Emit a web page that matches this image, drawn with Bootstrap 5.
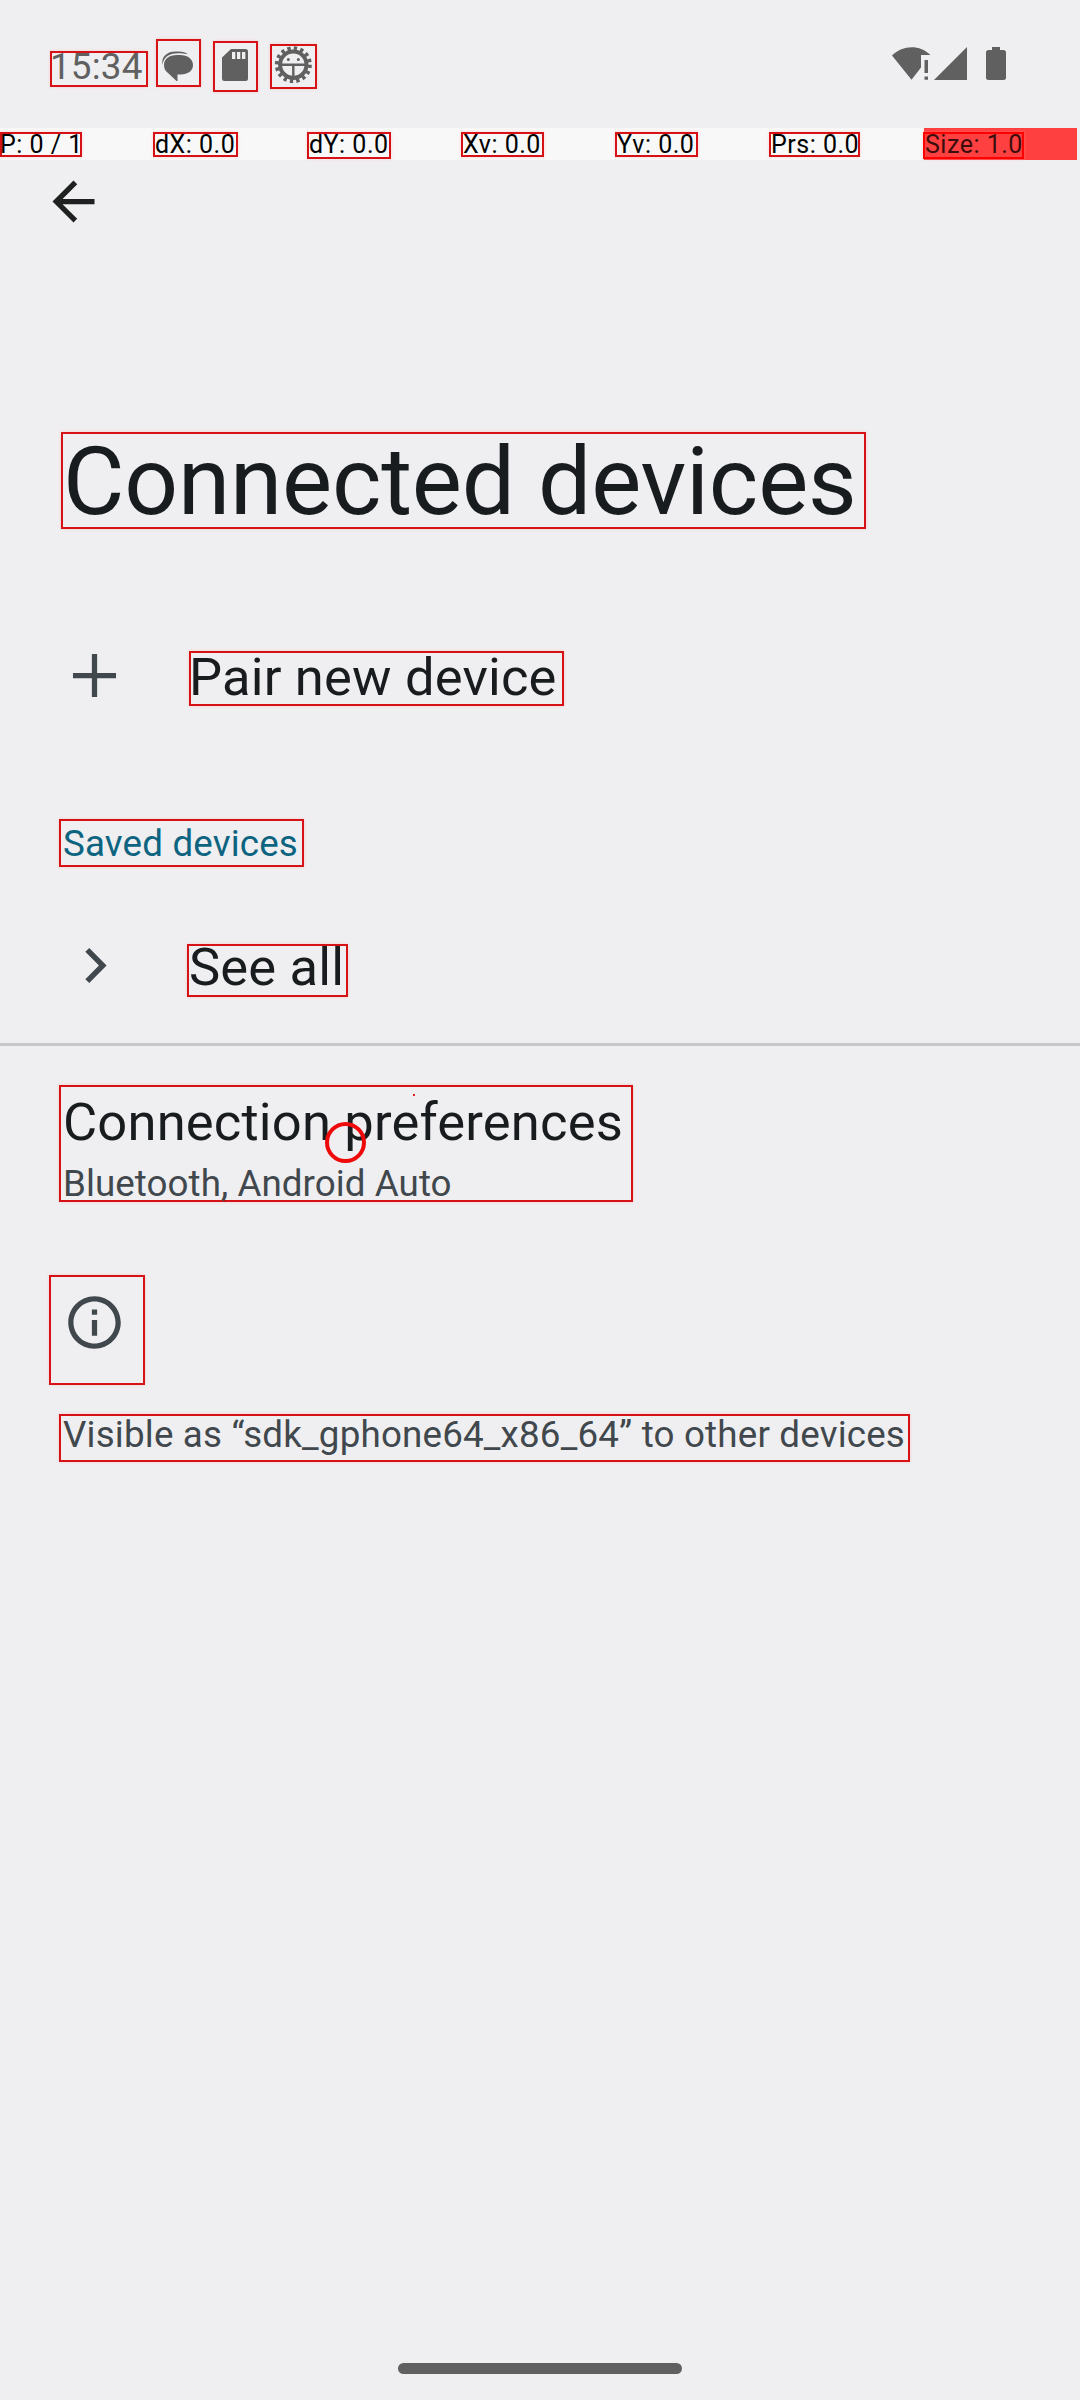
<!DOCTYPE html>
<html lang="en">
<head>
<meta charset="utf-8">
<meta name="viewport" content="width=device-width, initial-scale=1">
<title>Connected devices</title>
<link href="https://cdn.jsdelivr.net/npm/bootstrap@5.3.0/dist/css/bootstrap.min.css" rel="stylesheet">
<style>
body{background:#efeff1;color:#191c1e;font-family:Roboto,"Liberation Sans",sans-serif;width:1080px;height:2400px;overflow:hidden}
svg{display:block;flex:none}
.hl{border:2px solid #d61216;box-shadow:0 0 3px #ff9c9c66;white-space:nowrap;flex:none}
.status{height:128px;padding-left:50px;color:#606060}
.clock{width:98px;height:36px;margin-top:51px;font-size:36.75px;line-height:28px;text-indent:-2px;letter-spacing:.2px}
.probe{height:32px;width:1077px;gap:1px;font-size:25px;line-height:21px;color:#000;letter-spacing:.5px}
.cell{width:153.15px;background:#f8f8f8;padding-top:4px}
.cell .hl{height:25px;margin-left:-1px;width:max-content}
.tall .hl{height:27px!important}
.first .hl{margin-left:0;text-indent:-2px}
.cell.full{background:#ff4040;color:#3c0d0d}
.full .hl{border-color:#f00}
.back{height:272px;padding:10px 0 0 42px}
.title{margin-left:61px;width:805px;height:97px;font-size:94.5px;line-height:96px;letter-spacing:-.2px}
.item{font-size:52.5px;letter-spacing:.18px}
.sub{font-size:36.75px;color:#41484d;letter-spacing:.06px}
.pair{margin-top:122px;height:55px;padding-left:63px}
.pair .hl{width:375px;margin-left:63px;line-height:49px}
.saved{margin:113px 0 0 59px;width:245px;height:48px;color:#0c6480;padding-left:2px;line-height:46px;letter-spacing:.16px}
.seeall{margin-top:77px;height:53px;padding-left:63px}
.seeall .hl{width:161px;margin-left:61px;height:53px;line-height:43px}
.rule{margin-top:46px;height:3px;background:#c7c7c9}
.prefs{margin:39px 0 0 59px;width:574px;height:117px;padding-left:2px}
.prefs .item{line-height:71px}.prefs .sub{line-height:49px;margin-top:1px}
.touch{width:41px;height:41px;border:4px solid #ee0a0a;left:264px;top:35px}
.speck{width:2px;height:2px;background:#d22;left:352px;top:7px}
.info{margin:73px 0 0 49px;width:96px;height:110px;padding:14px 0 0 12px}
.visible-as{margin:29px 0 0 59px;width:851px;height:48px;padding-left:2px;line-height:37px;letter-spacing:.18px}
.home{width:284px;height:11px;margin-bottom:26px;background:#606060}
.nudge{margin-left:-2px}
</style>
<script src="https://cdn.jsdelivr.net/npm/bootstrap@5.3.0/dist/js/bootstrap.bundle.min.js"></script>
</head>
<body class="d-flex flex-column">
<header class="status d-flex align-items-start flex-shrink-0">
  <div class="hl clock">15:34</div>
  <div class="hl" style="margin:39px 0 0 8px">
    <svg width="41" height="44" viewBox="158 41 41 44" fill="currentColor"><path d="M177 55h3c7.500 0 13 4 13 10s-5.500 9.500-12 9.500h-3.500V81h-1L168 73c-3-2-4-5-4-8 0-6 5-10 13-10z"/><path d="M162.500 65c-1.500-9 5-13.500 13-13.500h3c4.500 0 7.500 1 9 2.700-3-1-6-1-9-1-8.500 0-15 3-16 11.800z"/></svg>
  </div>
  <div class="hl" style="margin:41px 0 0 12px">
    <svg width="41" height="47" viewBox="215 43 41 47"><path fill="currentColor" d="M231 49h14.500a2.500 2.500 0 0 1 2.500 2.500v27a2.500 2.500 0 0 1-2.500 2.500h-21a2.500 2.500 0 0 1-2.500-2.500V57.500z"/><path fill="#efeff1" d="M232 52h3.300v7H232zM237 52h3.300v7H237zM242 52h3.300v7H242z"/></svg>
  </div>
  <div class="hl" style="margin:44px 0 0 12px">
    <svg width="43" height="41" viewBox="272 46 43 41" fill="none" stroke="currentColor"><circle cx="293.300" cy="64.700" r="13.200" stroke-width="4"/><circle cx="293.300" cy="64.700" r="16.500" stroke-width="4" stroke-dasharray="3.300 3.180"/><path d="M280 64.700h27M293.300 64.700v13" stroke-width="2.400"/><circle cx="288.300" cy="59.500" r="1.500" fill="currentColor" stroke="none"/><circle cx="298.300" cy="59.500" r="1.500" fill="currentColor" stroke="none"/></svg>
  </div>
  <svg class="ms-auto" style="margin:45px 72px 0 0" width="118" height="38" viewBox="890 45 118 38" fill="currentColor"><path d="M892 55.500C903 44.500 920 44.500 930.500 55H921v12.500l-9.500 12.300z"/><path d="M924.500 60h3.500v13h-3.500zM924.500 76.500h3.500v3.300h-3.500zM934 80l33-33v33z"/><path d="M992 47h8v3h3.500a2.500 2.500 0 0 1 2.500 2.500v25a2.500 2.500 0 0 1-2.500 2.500h-15a2.500 2.500 0 0 1-2.500-2.500v-25a2.500 2.500 0 0 1 2.500-2.500h3.500z"/></svg>
</header>
<div class="probe d-flex flex-shrink-0">
  <div class="cell first"><div class="hl" style="width:82px">P: 0 / 1</div></div>
  <div class="cell"><div class="hl" style="width:85px">dX: 0.0</div></div>
  <div class="cell tall"><div class="hl" style="width:84px">dY: 0.0</div></div>
  <div class="cell"><div class="hl" style="width:83px">Xv: 0.0</div></div>
  <div class="cell"><div class="hl" style="width:83px">Yv: 0.0</div></div>
  <div class="cell"><div class="hl" style="width:91px">Prs: 0.0</div></div>
  <div class="cell full tall"><div class="hl" style="width:101px">Size: 1.0</div></div>
</div>
<div class="back flex-shrink-0"><svg width="63" height="63" viewBox="0 0 24 24" fill="#1f2020"><path d="M20 11H7.830l5.590-5.590L12 4l-8 8 8 8 1.410-1.410L7.830 13H20z"/></svg></div>
<main class="d-flex flex-column flex-grow-1">
  <h1 class="hl title fw-normal mb-0">Connected devices</h1>
  <div class="pair d-flex align-items-center">
    <svg width="63" height="63" viewBox="0 0 24 24" fill="#41484d" style="margin-top:-6px"><path d="M20.200 13h-7.200v7.200h-2V13H3.800v-2H11V3.800h2V11h7.200z"/></svg>
    <div class="hl item h-100"><span class="nudge">Pair new device</span></div>
  </div>
  <div class="hl sub saved">Saved devices</div>
  <div class="seeall d-flex align-items-center">
    <svg width="63" height="63" viewBox="0 0 24 24" fill="#41484d" style="margin-top:-10px"><path d="M10 5.300 8.500 6.800 13.700 12l-5.200 5.200L10 18.700l6.600-6.700z"/></svg>
    <div class="hl item">See all</div>
  </div>
  <div class="rule"></div>
  <div class="hl prefs position-relative">
    <div class="item">Connection preferences</div>
    <div class="sub">Bluetooth, Android Auto</div>
    <span class="touch rounded-circle position-absolute"></span><span class="speck position-absolute"></span>
  </div>
  <div class="hl info"><svg width="63" height="63" viewBox="0 0 24 24" fill="#41484d"><path d="M11 7h2v2h-2zm0 4h2v6h-2zm1-9C6.480 2 2 6.480 2 12s4.480 10 10 10 10-4.480 10-10S17.520 2 12 2zm0 18c-4.410 0-8-3.590-8-8s3.590-8 8-8 8 3.590 8 8-3.590 8-8 8z"/></svg></div>
  <div class="hl sub visible-as">Visible as “sdk_gphone64_x86_64” to other devices</div>
</main>
<div class="home rounded-pill mx-auto flex-shrink-0"></div>
</body>
</html>
